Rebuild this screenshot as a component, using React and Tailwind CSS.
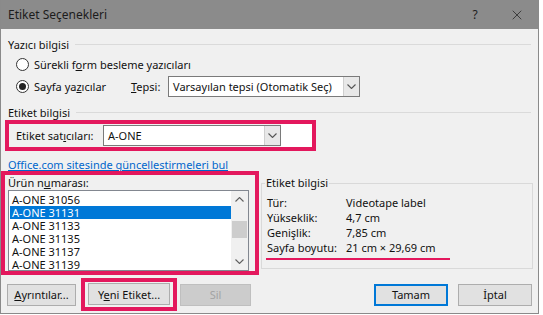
import { X } from 'lucide-react';

function Chevron({ up = false, className = '' }) {
  return (
    <svg width="9" height="5" viewBox="0 0 9 5" className={className}>
      <polyline
        points={up ? '0.5,4.5 4.5,0.5 8.5,4.5' : '0.5,0.5 4.5,4.5 8.5,0.5'}
        fill="none"
        stroke="currentColor"
        strokeWidth="1.1"
      />
    </svg>
  );
}

function Radio({ checked }) {
  return (
    <span className="w-[13px] h-[13px] rounded-full border border-[#333] bg-white flex items-center justify-center">
      {checked && <span className="w-[7px] h-[7px] rounded-full bg-[#222]" />}
    </span>
  );
}

function GroupHeader({ title }) {
  return (
    <div className="flex items-center h-[16px] pl-[7px] pr-[7px]">
      <span>{title}</span>
      <span className="flex-1 h-px bg-[#dadada] ml-[6px]" />
    </div>
  );
}

function Combo({ text, className }) {
  return (
    <div className={`flex items-center bg-white border border-[#7a7a7a] ${className}`}>
      <span className="flex-1 pl-[4px] whitespace-nowrap">{text}</span>
      <span className="w-[16px] h-full border-l border-[#cfcfcf] bg-[#e8e8e8] flex items-center justify-center text-[#555]">
        <Chevron />
      </span>
    </div>
  );
}

const products = ['A-ONE 31056', 'A-ONE 31131', 'A-ONE 31133', 'A-ONE 31135', 'A-ONE 31137', 'A-ONE 31139'];

const details = [
  ['Tür:', 'Videotape label'],
  ['Yükseklik:', '4,7 cm'],
  ['Genişlik:', '7,85 cm'],
  ['Sayfa boyutu:', '21 cm × 29,69 cm'],
];

function Button({ children, className = '' }) {
  return (
    <div className={`h-[22px] flex items-center justify-center border ${className}`}>
      {children}
    </div>
  );
}

export default function App() {
  return (
    <div className="w-[543px] h-[315px] bg-white font-['Noto_Sans',sans-serif] text-[11px] text-[#111] leading-none">
      <div className="w-[539px] h-[314px] flex flex-col border-x border-b border-[#8a8a8a] bg-[#f0f0f0]">
        {/* title bar */}
        <div className="h-[29px] shrink-0 bg-[#8b8b8b] flex items-center pl-[7px] text-[12px] text-[#1c1c1c]">
          <span className="flex-1">Etiket Seçenekleri</span>
          <span className="w-[20px] text-center text-[12px] mr-[24px]">?</span>
          <X size={16} strokeWidth={1.2} className="mr-[13px] text-[#2a2a2a]" />
        </div>

        <div className="flex-1 flex flex-col">
          <div className="mt-[7px]">
            <GroupHeader title="Yazıcı bilgisi" />
          </div>
          <div className="mt-[3px] h-[18px] flex items-center pl-[15px] gap-[5px]">
            <Radio />
            <span className="whitespace-nowrap">
              Sürekli f<span className="underline">o</span>rm besleme yazıcıları
            </span>
          </div>
          <div className="mt-[3px] h-[21px] flex items-center pl-[15px]">
            <Radio checked />
            <span className="ml-[5px] w-[97px] whitespace-nowrap">
              Sayfa ya<span className="underline">z</span>ıcılar
            </span>
            <span className="w-[37px]">
              <span className="underline">T</span>epsi:
            </span>
            <Combo text="Varsayılan tepsi (Otomatik Seç)" className="w-[192px] h-[21px]" />
          </div>

          <div className="mt-[7px]">
            <GroupHeader title="Etiket bilgisi" />
          </div>
          <div className="ml-[4px] w-[311px] h-[31px] border-4 border-[#e3185d] flex items-center">
            <span className="pl-[7px] w-[94px] whitespace-nowrap">
              Etiket sat<span className="underline">ı</span>cıları:
            </span>
            <Combo text="A-ONE" className="w-[178px] h-[21px]" />
            <span className="flex-1 h-full bg-white" />
          </div>

          <div className="mt-[6px] h-[14px] pl-[7px] flex items-center">
            <span className="text-[#0066cc] underline">Office.com sitesinde güncellestirmeleri bul</span>
          </div>

          <div className="flex h-[104px]">
            <div className="w-[258px] h-full border-[4px] border-[#e3185d] flex flex-col pl-[3px] pr-[6px]">
              <div className="h-[15px] flex items-center">
                Ürün n<span className="underline">u</span>marası:
              </div>
              <div className="flex-1 bg-white border border-[#828790] flex overflow-hidden">
                <div className="flex-1 pt-[2px] pl-px">
                  {products.map((p, i) => (
                    <div
                      key={p}
                      className={`h-[13px] leading-[13px] pl-[2px] ${i === 1 ? 'bg-[#0078d7] text-white' : ''}`}
                    >
                      {p}
                    </div>
                  ))}
                </div>
                <div className="w-[17px] bg-[#f0f0f0] flex flex-col items-center text-[#606060]">
                  <div className="h-[17px] flex items-center justify-center">
                    <Chevron up />
                  </div>
                  <div className="mt-[13px] w-[15px] h-[17px] bg-[#cdcdcd]" />
                  <div className="flex-1" />
                  <div className="h-[17px] flex items-center justify-center">
                    <Chevron />
                  </div>
                </div>
              </div>
            </div>

            <div className="flex-1 ml-[2px] mr-[5px] pt-[12px]">
              <div className="h-[86px] border border-[#d9d9d9] relative pt-[11px] pl-[5px]">
                <span className="absolute -top-[7px] left-[3px] px-[1px] bg-[#f0f0f0]">Etiket bilgisi</span>
                {details.map(([k, v]) => (
                  <div key={k} className="h-[15px] flex items-center">
                    <span className="w-[79px]">{k}</span>
                    <span>{v}</span>
                  </div>
                ))}
                <div className="mt-[3px] ml-[-1px] w-[184px] h-[1.5px] bg-[#e3185d]" />
              </div>
            </div>
          </div>

          <div className="mt-[3px] flex items-center pl-[6px]">
            <Button className="w-[69px] border-[#adadad] bg-[#e1e1e1]">
              <span>
                <span className="underline">A</span>yrıntılar...
              </span>
            </Button>
            <div className="ml-[5px] border-4 border-[#e3185d] px-[3px] pt-[1px] pb-[2px]">
              <Button className="w-[82px] border-[#adadad] bg-[#e1e1e1]">
                <span>
                  Y<span className="underline">e</span>ni Etiket...
                </span>
              </Button>
            </div>
            <Button className="ml-[3px] w-[71px] border-[#bfbfbf] bg-[#cccccc] text-[#a3a3a3]">Sil</Button>
            <Button className="ml-[123px] w-[74px] border-2 border-[#0078d7] bg-[#e1e1e1]">Tamam</Button>
            <Button className="ml-[10px] w-[74px] border-[#adadad] bg-[#e1e1e1]">İptal</Button>
          </div>
        </div>
      </div>
    </div>
  );
}
